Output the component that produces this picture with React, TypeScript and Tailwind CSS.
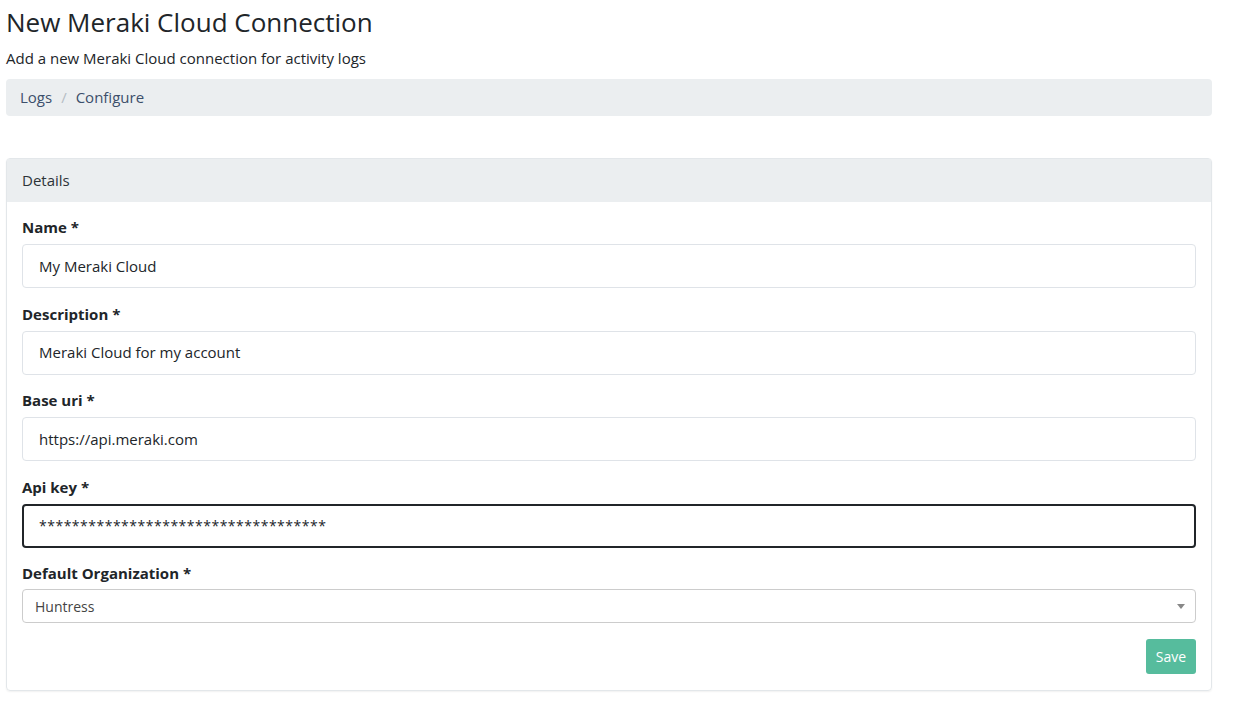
const fields = [
  { label: 'Name *', value: 'My Meraki Cloud' },
  { label: 'Description *', value: 'Meraki Cloud for my account' },
  { label: 'Base uri *', value: 'https://api.meraki.com' },
]

export default function App() {
  return (
    <div className="min-h-[717px] bg-white text-[#212529] font-['Open_Sans',sans-serif] pl-[6px] pr-[21px]">
      <h1 className="text-[26px] leading-[32px] pt-[6px] font-normal">New Meraki Cloud Connection</h1>
      <p className="text-[15px] leading-[20px] mt-[10px]">Add a new Meraki Cloud connection for activity logs</p>

      {/* Breadcrumb */}
      <nav className="mt-[11px] h-[37px] bg-[#ebeef0] rounded-[4px] flex items-center px-[14px] text-[15px] text-[#3c4f6b]">
        <span>Logs</span>
        <span className="mx-[9px] text-[#b5bcc4]">/</span>
        <span>Configure</span>
      </nav>

      {/* Card */}
      <div className="mt-[42px] border border-[#e3e7ea] rounded-[4px] shadow-[0_1px_2px_rgba(0,0,0,0.06)]">
        <div className="h-[43px] bg-[#ebeef0] flex items-center px-[15px] text-[15px] text-[#2d3338]">Details</div>
        <div className="px-[15px] pt-[14px] pb-[16px]">
          {fields.map((f) => (
            <div key={f.label} className="mb-[14.5px]">
              <label className="block text-[15px] font-bold leading-[22px] mb-[6px]">{f.label}</label>
              <div className="h-[44px] border border-[#dfe3e8] rounded-[4px] flex items-center px-[16px] text-[15px]">
                {f.value}
              </div>
            </div>
          ))}
          <div className="mb-[14.5px]">
            <label className="block text-[15px] font-bold leading-[22px] mb-[6px]">Api key *</label>
            <div className="h-[44px] border-2 border-[#212529] rounded-[4px] flex items-center px-[15px] text-[14px] tracking-[0.5px]">
              ***********************************
            </div>
          </div>
          <div>
            <label className="block text-[15px] font-bold leading-[22px] mb-[5px]">Default Organization *</label>
            <div className="h-[34px] border border-[#cccccc] rounded-[4px] flex items-center justify-between pl-[12px] pr-[10px] text-[14px] text-[#444]">
              <span>Huntress</span>
              <svg width="8" height="5" viewBox="0 0 8 5"><path d="M0 0h8L4 5z" fill="#888" /></svg>
            </div>
          </div>
          <div className="flex justify-end mt-[16px]">
            <button className="h-[35px] w-[50px] bg-[#56bc9d] text-white text-[14px] rounded-[3px]">Save</button>
          </div>
        </div>
      </div>
    </div>
  )
}
